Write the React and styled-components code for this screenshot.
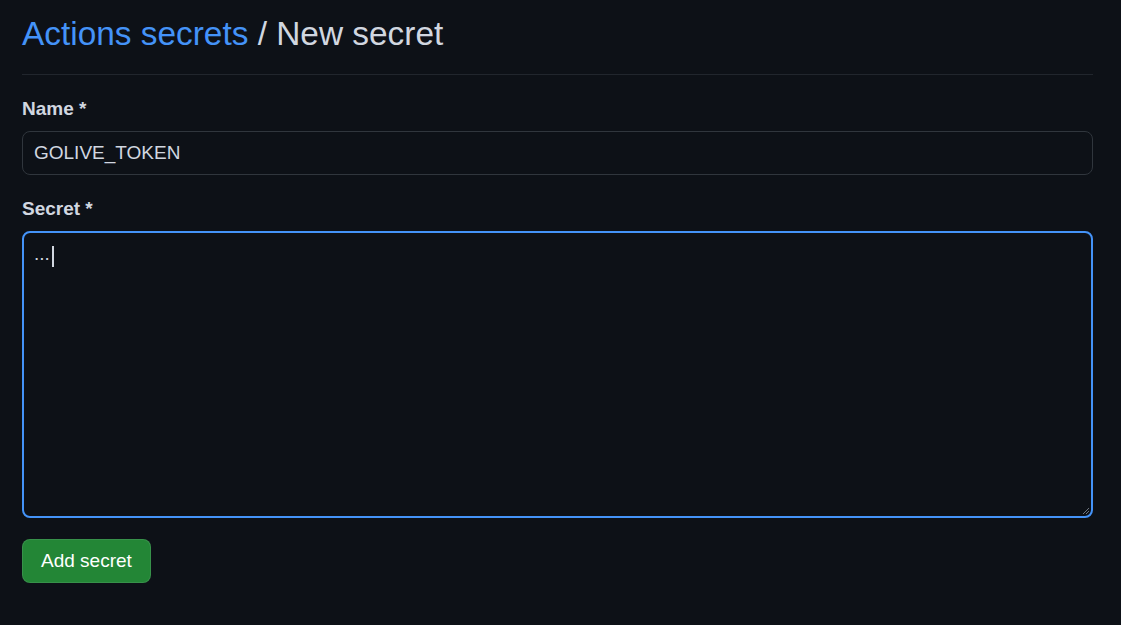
import React from "react";
import styled, { createGlobalStyle } from "styled-components";

const Global = createGlobalStyle`
  html, body { margin: 0; padding: 0; background: #0d1117; }
  body { font-family: "Liberation Sans", Arial, sans-serif; color: #d1d7e0; }
  * { box-sizing: border-box; }
`;

const Page = styled.main`
  padding: 13px 28px 40px 22px;
  min-height: 625px;
  background: #0d1117;
`;

const Header = styled.div`
  padding-bottom: 20px;
  border-bottom: 1px solid #21262d;
`;

const Title = styled.h1`
  margin: 0;
  font-size: 33.4px;
  line-height: 41px;
  font-weight: 400;
  color: #d1d7e0;
`;

const Crumb = styled.a`
  color: #4493f8;
  text-decoration: none;
`;

const Form = styled.form`
  display: flex;
  flex-direction: column;
  padding-top: 22px;
`;

const Field = styled.div`
  display: flex;
  flex-direction: column;
  gap: 10px;
  margin-bottom: ${(p) => p.$mb || 22}px;
`;

const Label = styled.label`
  font-size: 19px;
  line-height: 24px;
  font-weight: 700;
  color: #d1d7e0;
`;

const Input = styled.div`
  height: 44px;
  display: flex;
  align-items: center;
  padding: 0 11px;
  border: 1px solid #30363d;
  border-radius: 8px;
  background: #0d1117;
  font-size: 19px;
  color: #d1d7e0;
`;

const TextArea = styled.div`
  position: relative;
  height: 287px;
  padding: 7px 10px;
  border: 2px solid #4493f8;
  border-radius: 8px;
  background: #0d1117;
  font-size: 19px;
  line-height: 28px;
  color: #d1d7e0;
  display: flex;
  align-items: flex-start;
`;

const Caret = styled.span`
  display: inline-block;
  width: 2px;
  height: 21px;
  background: #d1d7e0;
  margin-left: 2px;
  margin-top: 6px;
`;

const Grip = styled.svg`
  position: absolute;
  right: 1px;
  bottom: 1px;
`;

const Button = styled.button`
  align-self: flex-start;
  height: 44px;
  padding: 0 18px 1px;
  border: 1px solid rgba(240, 246, 252, 0.1);
  border-radius: 8px;
  background: #238636;
  color: #ffffff;
  font-family: "Liberation Sans", Arial, sans-serif;
  font-size: 19px;
  cursor: pointer;
`;

export default function App() {
  return (
    <>
      <Global />
      <Page>
        <Header>
          <Title>
            <Crumb href="#">Actions secrets</Crumb> / New secret
          </Title>
        </Header>
        <Form onSubmit={(e) => e.preventDefault()}>
          <Field>
            <Label>Name *</Label>
            <Input>GOLIVE_TOKEN</Input>
          </Field>
          <Field $mb={21}>
            <Label>Secret *</Label>
            <TextArea role="textbox">
              <span>...</span>
              <Caret />
              <Grip width="9" height="9" viewBox="0 0 9 9">
                <path d="M8 2 L2 8 M8 5 L5 8" stroke="#6e7681" strokeWidth="1" />
              </Grip>
            </TextArea>
          </Field>
          <Button type="submit">Add secret</Button>
        </Form>
      </Page>
    </>
  );
}
